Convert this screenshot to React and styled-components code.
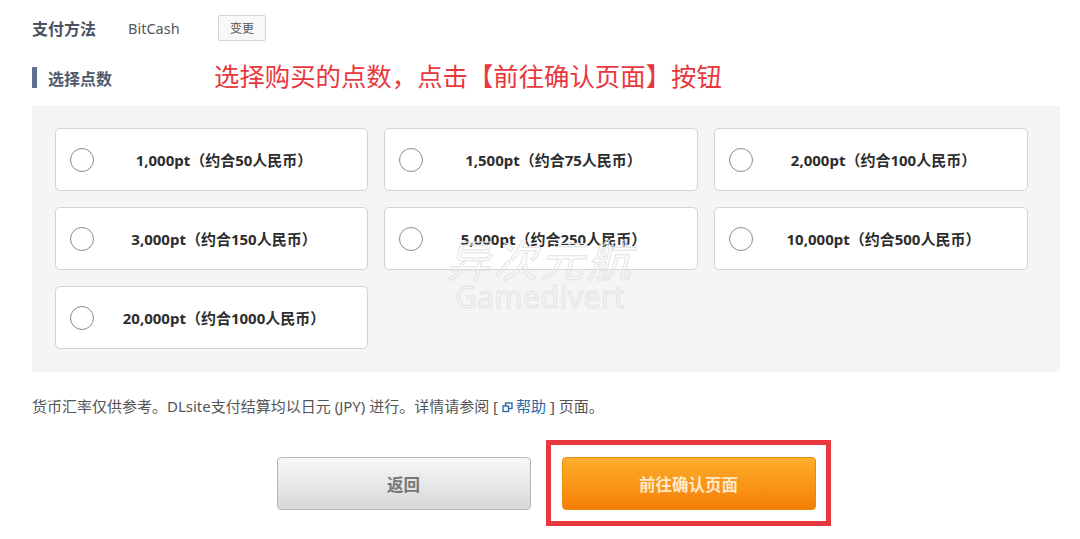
import React from "react";
import styled, { createGlobalStyle } from "styled-components";

const FONT = `"Noto Sans", "Noto Sans CJK SC", sans-serif`;

const Global = createGlobalStyle`
  html, body { margin: 0; padding: 0; background: #fff; }
  body { font-family: ${FONT}; color: #333; overflow: hidden; }
`;

const Page = styled.div`
  width: 1080px;
  height: 539px;
  padding: 15px 20px 0 32px;
  box-sizing: border-box;
  overflow: hidden;
`;

const MethodRow = styled.div`
  display: flex;
  align-items: center;
  height: 26px;
`;

const MethodLabel = styled.div`
  width: 96px;
  font-size: 16px;
  font-weight: 700;
  color: #4a5161;
`;

const MethodValue = styled.div`
  width: 90px;
  font-size: 14.5px;
  color: #555;
`;

const ChangeButton = styled.button`
  width: 48px;
  height: 26px;
  padding: 0;
  box-sizing: border-box;
  border: 1px solid #d5d5d5;
  border-radius: 2px;
  background: #f8f8f8;
  color: #555;
  font-family: ${FONT};
  font-size: 12px;
`;

const HeadingRow = styled.div`
  display: flex;
  align-items: center;
  height: 30px;
  margin-top: 21px;
`;

const Heading = styled.h2`
  width: 182px;
  height: 21px;
  margin: 0;
  padding-left: 11px;
  box-sizing: border-box;
  border-left: 5px solid #5f6f8e;
  font-size: 16px;
  line-height: 25px;
  font-weight: 700;
  color: #4f5a6e;
`;

const Annotation = styled.div`
  font-size: 25.4px;
  line-height: 28px;
  padding-bottom: 2px;
  color: #e8383d;
  white-space: nowrap;
`;

const Panel = styled.div`
  position: relative;
  margin-top: 14px;
  height: 266px;
  padding: 22px 32px 0 23px;
  box-sizing: border-box;
  background: #f5f5f5;
`;

const OptionGrid = styled.div`
  display: grid;
  grid-template-columns: 313px 314px 314px;
  grid-auto-rows: 63px;
  gap: 16px;
`;

const Option = styled.label`
  display: flex;
  align-items: center;
  padding: 0 13px 0 14px;
  box-sizing: border-box;
  background: #fff;
  border: 1px solid #d4d4d4;
  border-radius: 5px;
`;

const Radio = styled.span`
  flex: none;
  width: 24px;
  height: 24px;
  box-sizing: border-box;
  border: 1px solid #8a8a8a;
  border-radius: 50%;
  background: #fff;
`;

const OptionText = styled.span`
  flex: 1;
  text-align: center;
  font-size: 15px;
  font-weight: 700;
  color: #2d2d2d;
  white-space: nowrap;
`;

const Watermark = styled.div`
  position: absolute;
  left: 400px;
  top: 132px;
  width: 216px;
  text-align: center;
  color: transparent;
  -webkit-text-stroke: 1px #e4e4e4;
  pointer-events: none;
`;

const WatermarkCn = styled.div`
  font-size: 44px;
  line-height: 44px;
  font-style: italic;
  letter-spacing: 3px;
  white-space: nowrap;
`;

const WatermarkEn = styled.div`
  font-size: 30px;
  line-height: 30px;
  letter-spacing: 0.5px;
  white-space: nowrap;
`;

const Note = styled.p`
  margin: 24px 0 0;
  font-size: 15px;
  line-height: 20px;
  color: #555;
  white-space: nowrap;
`;

const HelpLink = styled.a`
  color: #2a6aa8;
`;

const PopIcon = styled.svg`
  width: 11px;
  height: 11px;
  vertical-align: -1px;
  margin-right: 3px;
`;

const Actions = styled.div`
  display: flex;
  justify-content: center;
  gap: 31px;
  margin-top: 41px;
`;

const ActionButton = styled.button`
  position: relative;
  width: 254px;
  height: 53px;
  padding: 0;
  box-sizing: border-box;
  border-radius: 4px;
  font-family: ${FONT};
  font-size: 16.5px;
  font-weight: 700;
  border: 1px solid ${(p) => (p.$primary ? "#e88a10" : "#b5b5b5")};
  color: ${(p) => (p.$primary ? "#ffe9c8" : "#777")};
  background: ${(p) =>
    p.$primary
      ? "linear-gradient(#fdae2c, #f57f05)"
      : "linear-gradient(#f7f7f7, #d8d8d8)"};
`;

const Highlight = styled.span`
  position: absolute;
  left: -17px;
  top: -18px;
  width: 285px;
  height: 86px;
  box-sizing: border-box;
  border: 5px solid #e83a3e;
  pointer-events: none;
`;

const options = [
  "1,000pt（约合50人民币）",
  "1,500pt（约合75人民币）",
  "2,000pt（约合100人民币）",
  "3,000pt（约合150人民币）",
  "5,000pt（约合250人民币）",
  "10,000pt（约合500人民币）",
  "20,000pt（约合1000人民币）",
];

export default function App() {
  return (
    <Page>
      <Global />
      <MethodRow>
        <MethodLabel>支付方法</MethodLabel>
        <MethodValue>BitCash</MethodValue>
        <ChangeButton>变更</ChangeButton>
      </MethodRow>
      <HeadingRow>
        <Heading>选择点数</Heading>
        <Annotation>选择购买的点数，点击【前往确认页面】按钮</Annotation>
      </HeadingRow>
      <Panel>
        <OptionGrid>
          {options.map((o) => (
            <Option key={o}>
              <Radio />
              <OptionText>{o}</OptionText>
            </Option>
          ))}
        </OptionGrid>
        <Watermark>
          <WatermarkCn>异次元航</WatermarkCn>
          <WatermarkEn>Gamedivert</WatermarkEn>
        </Watermark>
      </Panel>
      <Note>
        货币汇率仅供参考。DLsite支付结算均以日元 (JPY) 进行。详情请参阅 [{" "}
        <HelpLink>
          <PopIcon viewBox="0 0 11 11" fill="none" stroke="#2a6aa8" strokeWidth="1.4">
            <rect x="3.5" y="1" width="6.5" height="5.5" />
            <rect x="1" y="4" width="5.5" height="5.5" fill="#fff" />
          </PopIcon>
          帮助
        </HelpLink>{" "}
        ] 页面。
      </Note>
      <Actions>
        <ActionButton>返回</ActionButton>
        <ActionButton $primary>
          前往确认页面
          <Highlight />
        </ActionButton>
      </Actions>
    </Page>
  );
}
